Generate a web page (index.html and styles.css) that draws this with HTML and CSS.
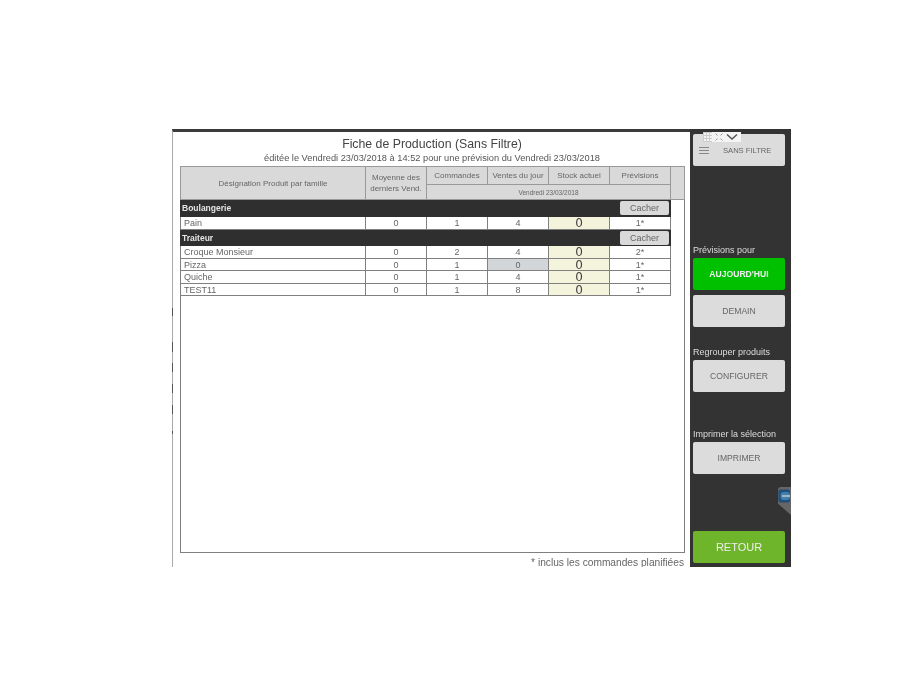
FILE: index.html
```html
<!DOCTYPE html>
<html lang="fr">
<head>
    <meta charset="UTF-8">
    <title>Fiche de Production</title>
    <link rel="stylesheet" href="styles.css">
</head>
<body>
    <div class="app">
        <div class="content">
            <div class="ticks"></div>
            <h1>Fiche de Production (Sans Filtre)</h1>
            <p class="subtitle">éditée le Vendredi 23/03/2018 à 14:52 pour une prévision du Vendredi 23/03/2018</p>

            <div class="frame">
                <table class="prod">
                    <colgroup>
                        <col class="c-name">
                        <col class="c-num" span="5">
                        <col class="c-scroll">
                    </colgroup>
                    <thead>
                        <tr class="head-top">
                            <th rowspan="2">Désignation Produit par famille</th>
                            <th rowspan="2">Moyenne des<br>derniers Vend.</th>
                            <th>Commandes</th>
                            <th>Ventes du jour</th>
                            <th>Stock actuel</th>
                            <th>Prévisions</th>
                            <th rowspan="2"></th>
                        </tr>
                        <tr class="head-sub">
                            <th colspan="4">Vendredi 23/03/2018</th>
                        </tr>
                    </thead>
                    <tbody>
                        <tr class="family">
                            <td colspan="6"><div class="family-in"><span>Boulangerie</span><button class="hide">Cacher</button></div></td>
                            <td class="blank"></td>
                        </tr>
                        <tr class="row tall">
                            <td>Pain</td><td>0</td><td>1</td><td>4</td><td class="stock">0</td><td>1*</td><td class="blank"></td>
                        </tr>
                        <tr class="family short">
                            <td colspan="6"><div class="family-in"><span>Traiteur</span><button class="hide">Cacher</button></div></td>
                            <td class="blank"></td>
                        </tr>
                        <tr class="row tall">
                            <td>Croque Monsieur</td><td>0</td><td>2</td><td>4</td><td class="stock">0</td><td>2*</td><td class="blank"></td>
                        </tr>
                        <tr class="row">
                            <td>Pizza</td><td>0</td><td>1</td><td class="none">0</td><td class="stock">0</td><td>1*</td><td class="blank"></td>
                        </tr>
                        <tr class="row tall">
                            <td>Quiche</td><td>0</td><td>1</td><td>4</td><td class="stock">0</td><td>1*</td><td class="blank"></td>
                        </tr>
                        <tr class="row">
                            <td>TEST11</td><td>0</td><td>1</td><td>8</td><td class="stock">0</td><td>1*</td><td class="blank"></td>
                        </tr>
                    </tbody>
                </table>
            </div>
            <p class="note">* inclus les commandes planifiées</p>
        </div>

        <div class="side">
            <div class="toolbar">
                <span class="grid-ico"></span>
                <svg width="8" height="8" viewBox="0 0 8 8"><path d="M.5.5l2 2M7.5.5l-2 2M.5 7.5l2-2M7.5 7.5l-2-2" stroke="#999" fill="none"/></svg>
                <svg width="12" height="8" viewBox="0 0 12 8"><path d="M1 1.5l5 4.5 5-4.5" stroke="#555" stroke-width="1.5" fill="none"/></svg>
            </div>
            <button class="btn filter">
                <svg width="10" height="7" viewBox="0 0 10 7"><path d="M0 .5h10M0 3.5h10M0 6.5h10" stroke="#888"/></svg>
                <span>SANS FILTRE</span>
            </button>
            <div class="side-label first">Prévisions pour</div>
            <button class="btn green">AUJOURD'HUI</button>
            <button class="btn next">DEMAIN</button>
            <div class="side-label group">Regrouper produits</div>
            <button class="btn">CONFIGURER</button>
            <div class="side-label print">Imprimer la sélection</div>
            <button class="btn">IMPRIMER</button>
            <div class="tab">
                <svg width="12" height="14" viewBox="0 0 12 14"><rect x=".5" y=".5" width="11.5" height="13" rx="2" fill="#1f4f7a"/><rect x="2.5" y="3" width="9.5" height="8" rx="3" fill="#3f7fb0"/><path d="M4 7h8" stroke="#c8c8c8" stroke-width="1.5"/></svg>
            </div>
            <button class="btn back">RETOUR</button>
        </div>
    </div>
</body>
</html>
```

FILE: styles.css
```css
body {
    margin: 0;
    padding: 129px 0 0 172px;
    background: #fff;
    font-family: "Liberation Sans", Arial, sans-serif;
    color: #555;
}

.app {
    display: flex;
    width: 619px;
    height: 438px;
    filter: blur(0.5px);
}

.content {
    position: relative;
    width: 518px;
    box-sizing: border-box;
    padding: 3px 6px 0 7px;
    border-top: 3px solid #3a3a3a;
    border-left: 1px solid #aaa;
}

.ticks {
    position: absolute;
    top: 0;
    left: -1px;
    bottom: 0;
    width: 1px;
    background: linear-gradient(to bottom,
        transparent 0 176px, #555 176px 184px, transparent 184px 210px,
        #555 210px 220px, transparent 220px 231px, #555 231px 240px,
        transparent 240px 252px, #555 252px 261px, transparent 261px 273px,
        #555 273px 282px, transparent 282px 299px, #555 299px 302px, transparent 302px);
}

h1 {
    margin: 1px 0 0;
    text-align: center;
    font-size: 12.3px;
    line-height: 16px;
    font-weight: 400;
    color: #444;
}

.subtitle {
    margin: 0;
    text-align: center;
    font-size: 9.25px;
    line-height: 12px;
    color: #555;
}

.frame {
    margin-top: 2px;
    height: 387px;
    box-sizing: border-box;
    border: 1px solid #808080;
    border-top: 0;
    width: 505px;
}

.prod {
    border-collapse: collapse;
    table-layout: fixed;
    width: 504px;
    margin-left: -1px;
    font-size: 9px;
    color: #666;
}

.c-name { width: 185px; }
.c-num { width: 61px; }
.c-scroll { width: 14px; }

.prod th {
    background: #d9d9d9;
    border: 1px solid #999;
    font-weight: 400;
    font-size: 8px;
    line-height: 11px;
    color: #666;
    padding: 0;
}

.head-top th { height: 17px; }
.prod .head-sub th { height: 14px; font-size: 6.5px; }

.prod td {
    padding: 0;
    text-align: center;
    border: 1px solid #808080;
    background: #fff;
    height: 11px;
    line-height: 10px;
}

.prod .tall td { height: 12px; }

.row td:first-child {
    text-align: left;
    padding-left: 3px;
}

.prod td.stock {
    background: #f4f3dc;
    font-family: "DejaVu Sans", sans-serif;
    font-size: 12px;
    color: #444;
}

.prod td.none { background: #d3d6d9; }

.prod td.blank,
.prod .family td.blank {
    border: 0;
    background: transparent;
}

.prod .family td {
    background: #2f2f2f;
    border-color: #2f2f2f;
    height: 16px;
}

.prod .family.short td { height: 15px; }

.family-in {
    display: flex;
    justify-content: space-between;
    align-items: center;
    padding: 0 1px;
    color: #e4e4e4;
    font-size: 8.5px;
    font-weight: 700;
}

.hide {
    width: 49px;
    height: 14px;
    padding: 0;
    border: 0;
    border-radius: 2px;
    background: #d9d9d9;
    color: #666;
    font-family: inherit;
    font-size: 9px;
}

.note {
    margin: 4px 0 0;
    text-align: right;
    font-size: 10.2px;
    line-height: 11px;
    color: #666;
}

.side {
    position: relative;
    display: flex;
    flex-direction: column;
    width: 101px;
    box-sizing: border-box;
    padding: 5px 6px 0 3px;
    background: #333;
}

.btn {
    display: block;
    width: 92px;
    height: 32px;
    flex: none;
    padding: 0;
    border: 0;
    border-radius: 2px;
    background: #dcdcdc;
    color: #666;
    font-family: inherit;
    font-size: 8.6px;
}

.filter {
    display: flex;
    align-items: center;
    padding-left: 6px;
    gap: 14px;
    font-size: 7.6px;
}

.green {
    background: #00c000;
    color: #eee;
    font-weight: 700;
}

.next { margin-top: 5px; }

.back {
    margin-top: 57px;
    background: #6fb52c;
    color: #eee;
    font-size: 11px;
}

.side-label {
    color: #ddd;
    font-size: 9px;
    line-height: 12px;
    margin-bottom: 2px;
}

.first { margin-top: 78px; }
.group { margin-top: 19px; }
.print { margin-top: 36px; }

.toolbar {
    position: absolute;
    top: 3px;
    left: 13px;
    display: flex;
    align-items: center;
    gap: 3px;
    height: 10px;
    padding-right: 3px;
    background: #f4f4f4;
}

.grid-ico {
    width: 9px;
    height: 10px;
    background:
        repeating-linear-gradient(0deg, #ccc 0 1px, transparent 1px 3px),
        repeating-linear-gradient(90deg, #ccc 0 1px, transparent 1px 3px);
}

.tab {
    position: absolute;
    top: 358px;
    right: 0;
    width: 13px;
    height: 28px;
    background: #666;
    border-radius: 3px 0 0 0;
    clip-path: polygon(0 0, 100% 0, 100% 100%, 0 60%);
}

.tab svg {
    display: block;
    margin-top: 2px;
}
```
